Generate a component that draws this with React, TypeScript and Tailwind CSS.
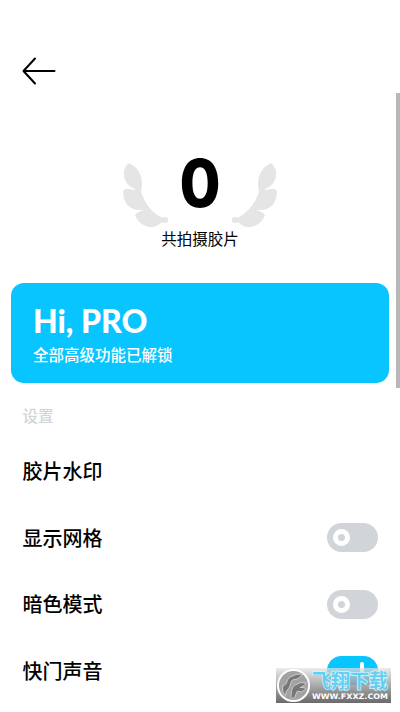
import React, { useState } from 'react';

interface Setting {
  key: string;
  label: string;
  toggle: boolean;
}

const settings: Setting[] = [
  { key: 'watermark', label: '胶片水印', toggle: false },
  { key: 'grid', label: '显示网格', toggle: true },
  { key: 'dark', label: '暗色模式', toggle: true },
  { key: 'sound', label: '快门声音', toggle: true }
];

function Wing({ className = '' }: { className?: string }) {
  return (
    <svg viewBox="0 0 180 225" className={`h-[75px] w-[60px] ${className}`} fill="#e5e5e5">
      <path d="M43 25C20 36 20 82 50 97Q61 102 62 107C45 101 31 101 25 106C22 145 46 170 85 164C74 169 62 174 60 180C74 218 118 227 138 203Q145 201 150 204C163 203 163 187 151 186Q144 189 136 185C110 172 87 140 78 110C86 75 77 40 43 25Z" />
    </svg>
  );
}

function Switch({ on, onChange }: { on: boolean; onChange: () => void }) {
  return (
    <button
      onClick={onChange}
      className={`flex h-[29px] w-[51px] items-center rounded-full px-1.5 ${
        on ? 'justify-end bg-[#08c5ff]' : 'justify-start bg-[#d1d5da]'
      }`}
    >
      {on ? (
        <span className="mr-2 h-[17px] w-1 rounded-full bg-white" />
      ) : (
        <span className="h-[17px] w-[17px] rounded-full border-[5px] border-white" />
      )}
    </button>
  );
}

function SiteMark() {
  return (
    <div className="absolute top-[668px] left-[276px] flex h-[35px] w-[115px] items-center bg-linear-to-b from-[#e4e4e4]/70 to-[#6a6a6a]">
      <svg viewBox="0 0 36 36" className="h-[35px] w-[35px] shrink-0">
        <circle cx="18" cy="18" r="16" fill="#a2a2a2" stroke="#fff" strokeWidth="2" />
        <path
          d="M7 18C12 18 10 12 15 9Q20 6 27 6Q24 12 18 12C14 13 16 19 12 22Q10 24 10 28Q6 26 7 18ZM15 29C17 27 14 23 19 18Q24 14 31 15Q29 19 25 20Q31 20 30 22Q27 26 22 24Q20 27 19 31Q16 32 15 29Z"
          fill="#777"
          stroke="#dcdcdc"
          strokeWidth="0.8"
        />
      </svg>
      <div className="flex flex-col">
        <svg viewBox="0 0 78 20" className="h-5 w-[78px] overflow-visible">
          <text
            x="1"
            y="17"
            textLength="76"
            lengthAdjust="spacingAndGlyphs"
            className="fill-[#62cef1] stroke-[#d8f5ff] font-['Noto_Sans_CJK_SC',sans-serif] text-[19px] font-bold"
            strokeWidth="1.4"
            paintOrder="stroke"
          >
            飞翔下载
          </text>
        </svg>
        <svg viewBox="0 0 78 10" className="h-2.5 w-[78px]">
          <text
            x="1"
            y="8"
            textLength="76"
            lengthAdjust="spacingAndGlyphs"
            className="fill-white font-['DejaVu_Sans',sans-serif] text-[7.5px] font-bold"
          >
            WWW.FXXZ.COM
          </text>
        </svg>
      </div>
    </div>
  );
}

export default function App() {
  const [enabled, setEnabled] = useState<Record<string, boolean>>({
    grid: false,
    dark: false,
    sound: true
  });

  return (
    <div className="relative h-[712px] w-[400px] overflow-hidden bg-white font-['Noto_Sans_CJK_SC',sans-serif] text-black">
      <header className="flex h-[93px] items-end px-[22px] pb-2">
        <button>
          <svg
            viewBox="0 0 34 28"
            className="block h-7 w-[34px]"
            fill="none"
            stroke="currentColor"
            strokeWidth="2"
            strokeLinecap="round"
            strokeLinejoin="round"
          >
            <path d="M13 1.5L1.5 14L13 26.5M1.5 14H32.5" />
          </svg>
        </button>
      </header>

      <section className="flex h-[189.5px] flex-col items-center pt-[62px]">
        <div className="flex h-[75px] items-center">
          <Wing />
          <span className="flex w-[50px] scale-x-90 justify-center pb-[20px] font-['Inter',sans-serif] text-[66px] leading-none font-extrabold">
            0
          </span>
          <Wing className="-scale-x-100" />
        </div>
        <span className="-mt-1 text-[15.5px] leading-6">共拍摄胶片</span>
      </section>

      <div className="mx-[11px] flex h-[100px] flex-col rounded-[13px] bg-[#08c5ff] px-[22px] pt-[22px] text-white">
        <span className="font-['Lato',sans-serif] text-[32px] leading-8 font-black">Hi, PRO</span>
        <span className="mt-[5px] text-[15.5px] leading-6 font-medium">全部高级功能已解锁</span>
      </div>

      <h2 className="mt-[20px] px-[22.5px] text-[15.5px] leading-6 font-medium text-[#d1d5da]">设置</h2>

      <ul className="mt-[11px] pr-[22px] pl-[22.5px]">
        {settings.map((item) => (
          <li key={item.key} className="flex h-[66.7px] items-center justify-between">
            <span className="text-[20px] leading-8 font-medium">{item.label}</span>
            {item.toggle && (
              <Switch
                on={enabled[item.key]}
                onChange={() => setEnabled({ ...enabled, [item.key]: !enabled[item.key] })}
              />
            )}
          </li>
        ))}
      </ul>

      <div className="absolute top-[93px] right-0 h-[295px] w-1 bg-[#b8b8b8]" />
      <SiteMark />
    </div>
  );
}
